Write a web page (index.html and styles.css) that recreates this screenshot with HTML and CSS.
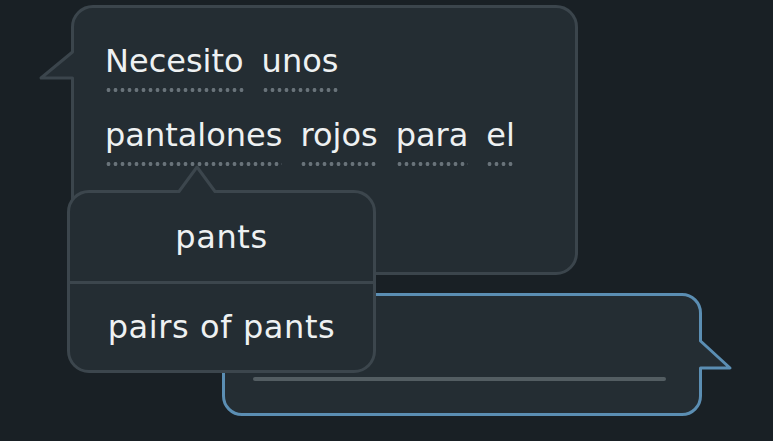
FILE: index.html
```html
<!DOCTYPE html>
<html lang="es">
<head>
<meta charset="utf-8">
<title>Chat</title>
<link rel="stylesheet" href="styles.css">
</head>
<body>
<div class="stage">
  <div class="bubble bubble-in">
    <svg class="tail tail-left" width="50" height="50" viewBox="0 0 50 50">
      <polygon class="tail-fill" points="11,38 42.5,12 47,12 47,38"/>
      <polyline class="tail-line" points="42.5,12 11,38 42.5,38"/>
    </svg>
    <div class="words">
      <span class="word">Necesito</span>
      <span class="word">unos</span>
      <span class="word">pantalones</span>
      <span class="word">rojos</span>
      <span class="word">para</span>
      <span class="word">el</span>
    </div>
  </div>

  <div class="bubble bubble-out">
    <svg class="tail tail-right" width="50" height="50" viewBox="0 0 50 50">
      <polygon class="tail-fill" points="6,11 10.5,11 40,38 6,38"/>
      <polyline class="tail-line" points="10.5,11 40,38 10.5,38"/>
    </svg>
    <div class="draft-line"></div>
  </div>

  <div class="popup">
    <svg class="popup-arrow" width="55" height="40" viewBox="0 0 55 40">
      <polygon class="arrow-fill" points="9,31.5 27,7 45,31.5 45,36 9,36"/>
      <polyline class="arrow-line" points="9,31.5 27,7 45,31.5"/>
    </svg>
    <div class="popup-row">pants</div>
    <div class="popup-row popup-row-last">pairs of pants</div>
  </div>
</div>
</body>
</html>
```

FILE: styles.css
```css
html,body{margin:0;padding:0;}
body{background:#192025;color:#eef1f2;font:32px/1.2 "DejaVu Sans",sans-serif;}

.stage{position:relative;width:773px;height:441px;padding-top:5px;box-sizing:border-box;overflow:hidden;}

.bubble{position:relative;box-sizing:border-box;background:#242d33;border:3px solid #3b454c;}
.bubble-in{margin-left:71px;width:507px;height:270px;border-radius:22px;padding:35px 0 0 31px;}
.bubble-out{margin:18px 0 0 222px;width:480px;height:123px;border-radius:20px;border-color:#5b8eb3;padding:81px 0 0 28px;}

.tail{position:absolute;overflow:visible;}
.tail-left{left:-44px;top:32px;}
.tail-right{left:465px;top:34px;}
.tail-fill{fill:#242d33;}
.tail-line{fill:none;stroke:#3b454c;stroke-width:3;stroke-linejoin:round;stroke-linecap:round;}
.tail-right .tail-line{stroke:#5b8eb3;}

.words{display:flex;flex-wrap:wrap;gap:25px 18px;width:420px;}
.word{display:inline-block;line-height:37px;padding-bottom:12px;
  background-image:radial-gradient(circle,#69737a 0 1.7px,transparent 2.2px);
  background-size:7px 4px;background-repeat:repeat-x;background-position:0 100%;}

.draft-line{width:413px;height:4px;border-radius:2px;background:#535d62;}

.popup{position:absolute;left:67px;top:190px;width:309px;height:183px;box-sizing:border-box;
  background:#242d33;border:3px solid #3c464d;border-radius:22px;display:flex;flex-direction:column;}
.popup-arrow{position:absolute;left:100px;top:-33px;overflow:visible;}
.arrow-fill{fill:#242d33;}
.arrow-line{fill:none;stroke:#3c464d;stroke-width:3;stroke-linejoin:round;stroke-linecap:round;}
.popup-row{height:88px;line-height:88px;text-align:center;letter-spacing:0.6px;}
.popup-row-last{flex:1;height:auto;line-height:86px;border-top:3px solid #3c464d;}
```
